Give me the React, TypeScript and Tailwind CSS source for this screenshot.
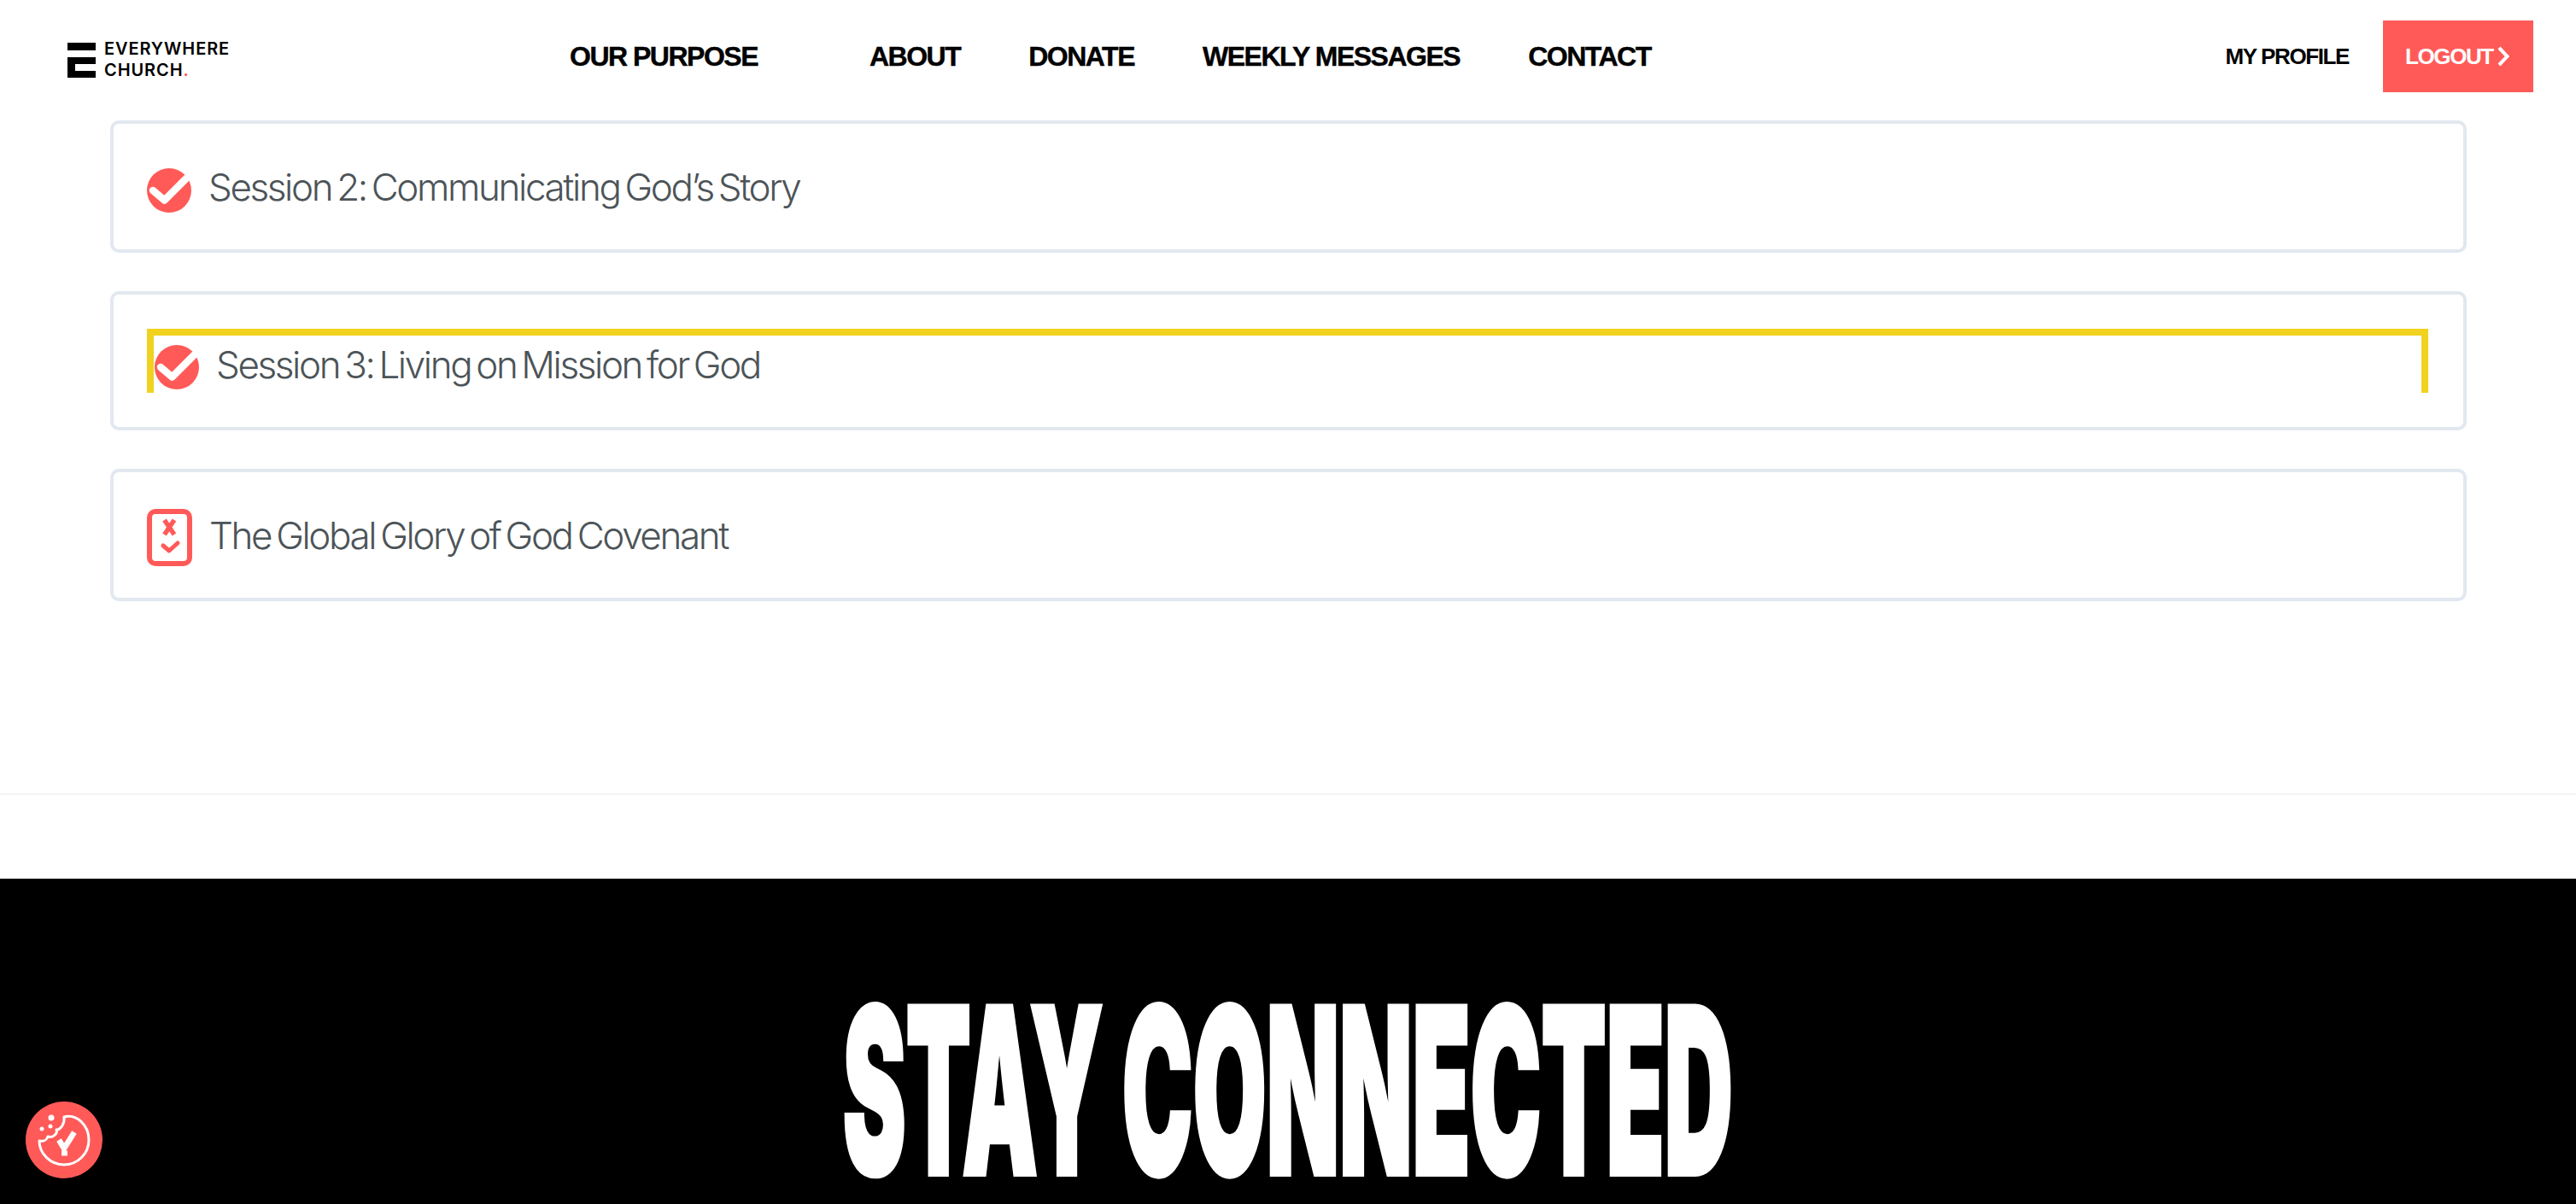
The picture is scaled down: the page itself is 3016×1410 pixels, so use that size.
const CORAL = "#ff5a58";

function CheckCircle({ className = "" }: { className?: string }) {
  return (
    <svg viewBox="0 0 52 52" className={`h-[52px] w-[52px] shrink-0 ${className}`}>
      <circle cx="26" cy="26" r="26" fill={CORAL} />
      <path d="M7 26 L20.500 37.500 L47 11" fill="none" stroke="#fff" strokeWidth="8.500" strokeLinecap="round" strokeLinejoin="round" />
    </svg>
  );
}

function CovenantIcon() {
  return (
    <svg viewBox="0 0 53 67" className="mt-[2px] h-[67px] w-[53px] shrink-0">
      <rect x="3" y="3" width="47" height="61" rx="7" fill="none" stroke={CORAL} strokeWidth="6" />
      <path d="M20.500 13 L32 30 M32 13 L20.500 30" stroke={CORAL} strokeWidth="5.500" fill="none" />
      <path d="M19 43 L26 49 L36 40" stroke={CORAL} strokeWidth="5" fill="none" strokeLinecap="round" strokeLinejoin="round" />
    </svg>
  );
}

function CookieIcon() {
  return (
    <svg viewBox="0 0 90 90" className="h-[90px] w-[90px]">
      <circle cx="45" cy="45" r="45" fill={CORAL} />
      <path d="M45 18 C60 14 74 28 74 45 C74 61 61 74 45 74 C29 74 16 61 16 46 C21 47 25 45 26 41 C31 43 38 38 36 33 C42 33 46 24 45 18 Z" fill="none" stroke="#fff" strokeWidth="3" strokeLinejoin="round" />
      <path d="M39 45 L45 55 L57 36" fill="none" stroke="#fff" strokeWidth="6.500" />
      <rect x="42" y="57.500" width="7" height="6" fill="#fff" />
      <circle cx="30" cy="19" r="3.500" fill="#fff" />
      <circle cx="19" cy="32" r="2.500" fill="#fff" />
      <circle cx="29" cy="29" r="2.500" fill="#fff" />
    </svg>
  );
}

function Logo() {
  return (
    <div className="flex items-start gap-[10px]">
      <div className="flex h-[41px] w-[33px] flex-col justify-between">
        <div className="h-[9px] bg-black" />
        <div className="h-[24px] border-y-[8px] border-l-[9px] border-black" />
      </div>
      <div className="-mt-[5px] font-['Inter',sans-serif] text-[20px] leading-[25px] font-semibold tracking-[0.900px] text-black">
        <div>EVERYWHERE</div>
        <div>
          CHURCH<span className="text-[#ff5a58]">.</span>
        </div>
      </div>
    </div>
  );
}

const titleClass = "font-['Inter',sans-serif] text-[44px] font-light tracking-[-2.400px] [word-spacing:-4px] text-[#4c5458]";

function Card({ icon, title }: { icon: React.ReactNode; title: string }) {
  return (
    <div className="rounded-[10px] border-4 border-[#e2e8f0] bg-white">
      <div className="flex h-[147px] items-center gap-[20px] pl-[39px] pt-[4px]">
        {icon}
        <span className={`mb-[3px] ${titleClass}`}>{title}</span>
      </div>
    </div>
  );
}

export default function App() {
  return (
    <div className="relative h-[1410px] w-[3016px] overflow-hidden bg-white font-['Liberation_Sans',sans-serif]">
      <header className="flex h-[141px] items-start pl-[79px] pr-[50px]">
        <div className="mt-[50px] w-[588px]">
          <Logo />
        </div>
        <nav className="mt-[46px] flex items-center gap-[80px] text-[32px] leading-[40px] font-bold tracking-[-1.500px] text-black [-webkit-text-stroke:0.4px_#000]">
          <span className="mr-[51px]">OUR PURPOSE</span>
          <span>ABOUT</span>
          <span>DONATE</span>
          <span>WEEKLY MESSAGES</span>
          <span>CONTACT</span>
        </nav>
        <div className="ml-auto mt-[24px] flex items-center gap-[40px]">
          <span className="text-[26px] font-bold tracking-[-1.400px] text-black">MY PROFILE</span>
          <div className="flex h-[84px] w-[176px] items-center gap-[5px] bg-[#ff5a58] pl-[26px] text-[26px] font-bold tracking-[-1.400px] text-white">
            LOGOUT
            <svg viewBox="0 0 14 24" className="h-[24px] w-[14px]">
              <path d="M2 2 L11.500 12 L2 22" fill="none" stroke="#fff" strokeWidth="4" />
            </svg>
          </div>
        </div>
      </header>

      <main className="flex h-[790px] flex-col gap-[45px] border-b-2 border-[#f3f4f6] pl-[129px] pr-[128px]">
        <Card icon={<CheckCircle className="mt-[4px]" />} title="Session 2: Communicating God’s Story" />
        <div className="rounded-[10px] border-4 border-[#e2e8f0] bg-white">
          <div className="flex h-[155px] flex-col pl-[39px] pr-[41px] pt-[40px]">
            <div className="flex h-[75px] items-start gap-[20px] border-x-[8px] border-t-[8px] border-b-0 border-[#f0d21f]">
              <CheckCircle className="ml-px mt-[11px]" />
              <span className={`mt-px ${titleClass}`}>Session 3: Living on Mission for God</span>
            </div>
          </div>
        </div>
        <Card icon={<CovenantIcon />} title="The Global Glory of God Covenant" />
      </main>

      <section className="mt-[98px] flex h-[381px] justify-center bg-black">
        <div className="mt-[143px] h-[210px] origin-top scale-x-[0.411] whitespace-nowrap font-['Inter',sans-serif] text-[270px] leading-[210px] font-black text-white [-webkit-text-stroke:6px_#fff]">
          STAY CONNECTED
        </div>
      </section>

      <div className="absolute bottom-[30px] left-[30px]">
        <CookieIcon />
      </div>
    </div>
  );
}
